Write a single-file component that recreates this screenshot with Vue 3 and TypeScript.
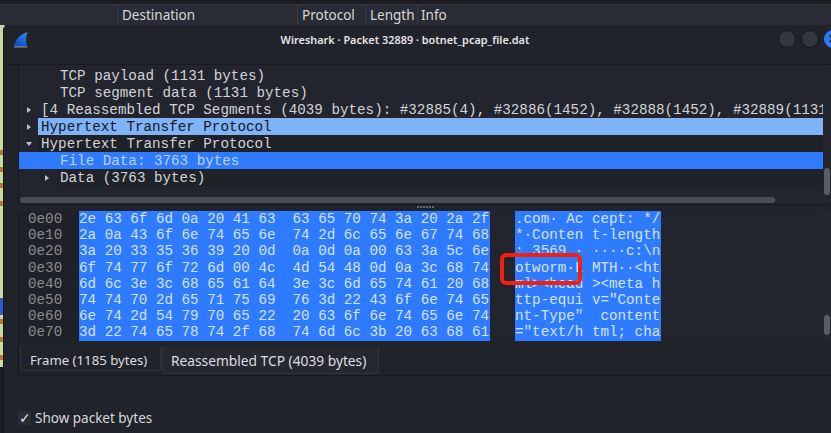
<script setup lang="ts">
interface TreeRow { text: string; indent: number; arrow?: 'right' | 'down'; kind?: string }
const columns = [
  { label: '', width: 118 },
  { label: 'Destination', width: 180 },
  { label: 'Protocol', width: 68 },
  { label: 'Length', width: 52 },
  { label: 'Info', width: 413 },
]
const tree: TreeRow[] = [
  { text: 'TCP payload (1131 bytes)', indent: 41 },
  { text: 'TCP segment data (1131 bytes)', indent: 41 },
  { text: '[4 Reassembled TCP Segments (4039 bytes): #32885(4), #32886(1452), #32888(1452), #32889(1131),', indent: 22, arrow: 'right' },
  { text: 'Hypertext Transfer Protocol', indent: 22, arrow: 'right', kind: 'related' },
  { text: 'Hypertext Transfer Protocol', indent: 22, arrow: 'down', kind: 'open' },
  { text: 'File Data: 3763 bytes', indent: 41, kind: 'selected' },
  { text: 'Data (3763 bytes)', indent: 41, arrow: 'right', kind: 'child' },
]
const hex = [
  ['0e00', '2e 63 6f 6d 0a 20 41 63  63 65 70 74 3a 20 2a 2f', '.com· Ac cept: */'],
  ['0e10', '2a 0a 43 6f 6e 74 65 6e  74 2d 6c 65 6e 67 74 68', '*·Conten t-length'],
  ['0e20', '3a 20 33 35 36 39 20 0d  0a 0d 0a 00 63 3a 5c 6e', ': 3569 · ····c:\\n'],
  ['0e30', '6f 74 77 6f 72 6d 00 4c  4d 54 48 0d 0a 3c 68 74', 'otworm·L MTH··<ht'],
  ['0e40', '6d 6c 3e 3c 68 65 61 64  3e 3c 6d 65 74 61 20 68', 'ml><head ><meta h'],
  ['0e50', '74 74 70 2d 65 71 75 69  76 3d 22 43 6f 6e 74 65', 'ttp-equi v="Conte'],
  ['0e60', '6e 74 2d 54 79 70 65 22  20 63 6f 6e 74 65 6e 74', 'nt-Type"  content'],
  ['0e70', '3d 22 74 65 78 74 2f 68  74 6d 6c 3b 20 63 68 61', '="text/h tml; cha'],
]
</script>

<template>
  <div class="page">
    <header class="columns">
      <div v-for="c in columns" :key="c.label" class="col" :style="{ width: c.width + 'px' }">{{ c.label }}</div>
    </header>
    <div class="desk">
      <div class="strip"></div>
      <main class="window">
        <div class="titlebar">
          <svg class="fin" width="16" height="17" viewBox="0 0 16 17">
            <defs>
              <linearGradient id="finfill" x1="0.7" y1="0" x2="0.3" y2="1">
                <stop offset="0" stop-color="#2f86f0" />
                <stop offset="1" stop-color="#0f49c0" />
              </linearGradient>
            </defs>
            <path d="M1 15.2C2 9 7 3 14.6 1.2 12.8 5.5 12.6 10.5 14 15.2Z" fill="url(#finfill)" />
            <path d="M1 15.2H14L14.4 16.4H1Z" fill="#7d8fa8" />
          </svg>
          <div class="title">Wireshark · Packet 32889 · botnet_pcap_file.dat</div>
          <div class="wbtns">
            <span class="wbtn"></span>
            <span class="wbtn"></span>
            <span class="wbtn close">×</span>
          </div>
        </div>
        <div class="body">
          <section class="treepane">
            <div class="treemain">
              <div class="rows">
                <div v-for="(r, i) in tree" :key="i" class="row" :class="r.kind">
                  <span class="lead" :style="{ width: r.indent + 'px' }">
                    <i v-if="r.arrow" class="arrow" :class="r.arrow"></i>
                  </span>
                  <span class="rowtext">{{ r.text }}</span>
                </div>
              </div>
              <div class="hbar"><div class="hthumb"></div></div>
            </div>
            <div class="vbar"><div class="vthumb"></div></div>
          </section>
          <div class="splitter"><span class="grip"></span></div>
          <section class="hexpane">
            <div class="hexmain">
              <div class="offsets">
                <div v-for="h in hex" :key="h[0]" class="hexrow">{{ h[0] }}</div>
              </div>
              <div class="hexbytes">
                <div v-for="h in hex" :key="h[0]" class="hexrow">{{ h[1] }}</div>
              </div>
              <div class="hexascii">
                <div v-for="h in hex" :key="h[0]" class="hexrow">{{ h[2] }}</div>
              </div>
              <div class="redbox"></div>
            </div>
            <div class="vbar hex"><div class="vthumb"></div></div>
          </section>
          <nav class="tabs">
            <div class="tab">Frame (1185 bytes)</div>
            <div class="tab active">Reassembled TCP (4039 bytes)</div>
          </nav>
          <label class="check">
            <span class="box">✓</span>
            <span>Show packet bytes</span>
          </label>
        </div>
      </main>
    </div>
  </div>
</template>

<style>
html, body { margin: 0; background: #1c1d23; overflow: hidden; }
</style>

<style scoped>
.page {
  width: 831px;
  height: 433px;
  display: flex;
  flex-direction: column;
  overflow: hidden;
  font-family: "Noto Sans", sans-serif;
  color: #d6d7da;
}
.columns {
  height: 21px;
  margin-top: 4px;
  display: flex;
  flex: none;
  background: #2a2c35;
  border-top: 1px solid #33353e;
  box-sizing: border-box;
}
.col {
  box-sizing: border-box;
  padding-left: 4px;
  border-right: 1px solid #3a3c45;
  font-size: 13.5px;
  line-height: 21px;
  flex: none;
}
.col:last-child { border-right: 0; padding-left: 3px; }
.desk { flex: 1; display: flex; min-height: 0; }
.strip {
  width: 3px;
  flex: none;
  position: relative;
  background: linear-gradient(
    #c6dba0 0 125px, #b5762e 125px 130px, #c6dba0 130px 142px, #b5762e 142px 147px,
    #c6dba0 147px 158px, #b5762e 158px 163px, #c6dba0 163px 176px, #b5762e 176px 181px,
    #c6dba0 181px 273px, #2a5fd0 273px 290px, #c6dba0 290px 294px, #b5762e 294px 299px,
    #c6dba0 299px 312px, #b5762e 312px 317px, #c6dba0 317px 330px, #b5762e 330px 335px,
    #c6dba0 335px 342px, #1a1b20 342px 100%
  );
}
.strip::before {
  content: "";
  position: absolute;
  left: 3px;
  top: 0;
  border-top: 4px solid #c6dba0;
  border-right: 2px solid transparent;
}
.window {
  flex: 1;
  min-width: 0;
  display: flex;
  flex-direction: column;
  background: #21232b;
  border-left: 1px solid #15161b;
}
.titlebar {
  height: 40px;
  flex: none;
  display: flex;
  align-items: flex-start;
  position: relative;
  box-sizing: border-box;
  border-bottom: 1px solid #191a20;
}
.fin { margin: 6px 0 0 9px; flex: none; }
.title {
  flex: 1;
  text-align: center;
  font-size: 10.9px;
  font-weight: 600;
  line-height: 15px;
  margin-top: 7px;
  margin-left: 3px;
  color: #e4e5e8;
}
.wbtns {
  display: flex;
  gap: 5px;
  margin: 5px -11px 0 0;
}
.wbtn {
  width: 18px;
  height: 18px;
  box-sizing: border-box;
  border-radius: 50%;
  background: #343640;
  border: 1px solid #14151a;
}
.wbtn.close {
  background: #2f78f5;
  border-color: #2f78f5;
  color: #14151a;
  font-size: 17px;
  font-weight: 700;
  line-height: 15px;
  text-align: center;
}
.body {
  flex: 1;
  min-height: 0;
  display: flex;
  flex-direction: column;
  padding-left: 14px;
}
.treepane {
  height: 140px;
  flex: none;
  display: flex;
  background: #23252e;
  border-left: 1px solid #191a20;
  border-bottom: 1px solid #191a20;
  box-sizing: border-box;
}
.treemain { flex: 1; min-width: 0; display: flex; flex-direction: column; }
.rows {
  padding-top: 2px;
  font-family: "Liberation Mono", monospace;
  font-size: 14.24px;
  height: 132px;
  box-sizing: border-box;
  overflow: hidden;
}
.row {
  height: 17px;
  line-height: 18px;
  display: flex;
  white-space: pre;
  color: #d2d3d6;
  overflow: hidden;
}
.lead { flex: none; display: flex; align-items: center; justify-content: flex-end; height: 17px; position: relative; z-index: 1; }
.arrow { width: 0; height: 0; display: block; margin-right: 10px; }
.arrow.right { border-left: 4px solid #c0c1c4; border-top: 3.5px solid transparent; border-bottom: 3.5px solid transparent; }
.arrow.down { border-top: 4px solid #c0c1c4; border-left: 3.5px solid transparent; border-right: 3.5px solid transparent; margin-right: 9px; }
.rowtext { flex: 1; min-width: 0; overflow: hidden; }
.row.related .rowtext { background: #7fb3f6; color: #12161f; padding-left: 3px; margin-left: -3px; }
.row.open .rowtext { background: #1f2128; padding-left: 3px; margin-left: -3px; }
.row.selected { background: #2f7bff; color: #b9d2fa; }
.row.child .rowtext { background: #20222a; padding-left: 3px; margin-left: -3px; }
.row.child .arrow { margin-right: 11px; }
.hbar { height: 7px; padding-top: 0; }
.hthumb { margin-left: 1px; width: 755px; height: 6px; border-radius: 3px; background: #4b4d54; }
.vbar { width: 8px; flex: none; padding-top: 103px; background: #24262f; box-sizing: border-box; }
.vthumb { width: 6px; height: 27px; border-radius: 3px; background: #5a5c63; margin-left: 1px; }
.vbar.hex { padding-top: 105px; }
.vbar.hex .vthumb { height: 20px; }
.splitter { height: 5px; flex: none; position: relative; }
.grip {
  position: absolute;
  left: 399px;
  top: 1px;
  width: 17px;
  height: 2px;
  background: repeating-linear-gradient(90deg, #666870 0 2px, transparent 2px 3px);
}
.hexpane {
  height: 131px;
  flex: none;
  display: flex;
  background: #23252e;
  border-left: 1px solid #191a20;
}
.hexmain {
  flex: 1;
  min-width: 0;
  display: flex;
  position: relative;
  font-family: "Liberation Mono", monospace;
  font-size: 14.24px;
  white-space: pre;
  padding-top: 1px;
}
.hexrow { height: 16.2px; line-height: 16.2px; }
.offsets { width: 60px; padding-left: 9px; box-sizing: border-box; color: #8b8b8b; background: #1f2128; height: 130px; }
.hexbytes { background: #2f7bff; color: #d3e2fc; width: 411px; height: 130px; }
.hexascii { background: #2f7bff; color: #d3e2fc; width: 146px; height: 130px; margin-left: 25px; }
.redbox {
  position: absolute;
  left: 481px;
  top: 43px;
  width: 82px;
  height: 32px;
  box-sizing: border-box;
  border: 4px solid #f1200f;
  border-radius: 6px;
}
.tabs {
  flex: none;
  display: flex;
  align-items: flex-start;
  height: 35px;
  box-sizing: border-box;
  padding-top: 6px;
  border-left: 1px solid #191a20;
  border-bottom: 1px solid #191a20;
}
.tab {
  height: 24px;
  line-height: 26px;
  box-sizing: border-box;
  width: 141px;
  margin-left: 1px;
  padding-left: 9px;
  font-size: 13.2px;
  white-space: nowrap;
  background: #21232b;
  border: 1px solid #32343c;
  border-top: 0;
  border-radius: 0 0 3px 3px;
  color: #dcdde0;
}
.tab.active {
  width: 217px;
  height: 27px;
  line-height: 28px;
  font-size: 13.75px;
  background: #262830;
  margin-left: 1px;
  padding-left: 8px;
}
.check {
  display: flex;
  align-items: center;
  gap: 4px;
  margin-top: 33px;
  font-size: 13.5px;
  color: #d6d7da;
}
.box {
  width: 13px;
  height: 14px;
  background: #2a2c34;
  color: #e4e5e8;
  font-size: 14px;
  line-height: 14px;
  text-align: center;
}
</style>
